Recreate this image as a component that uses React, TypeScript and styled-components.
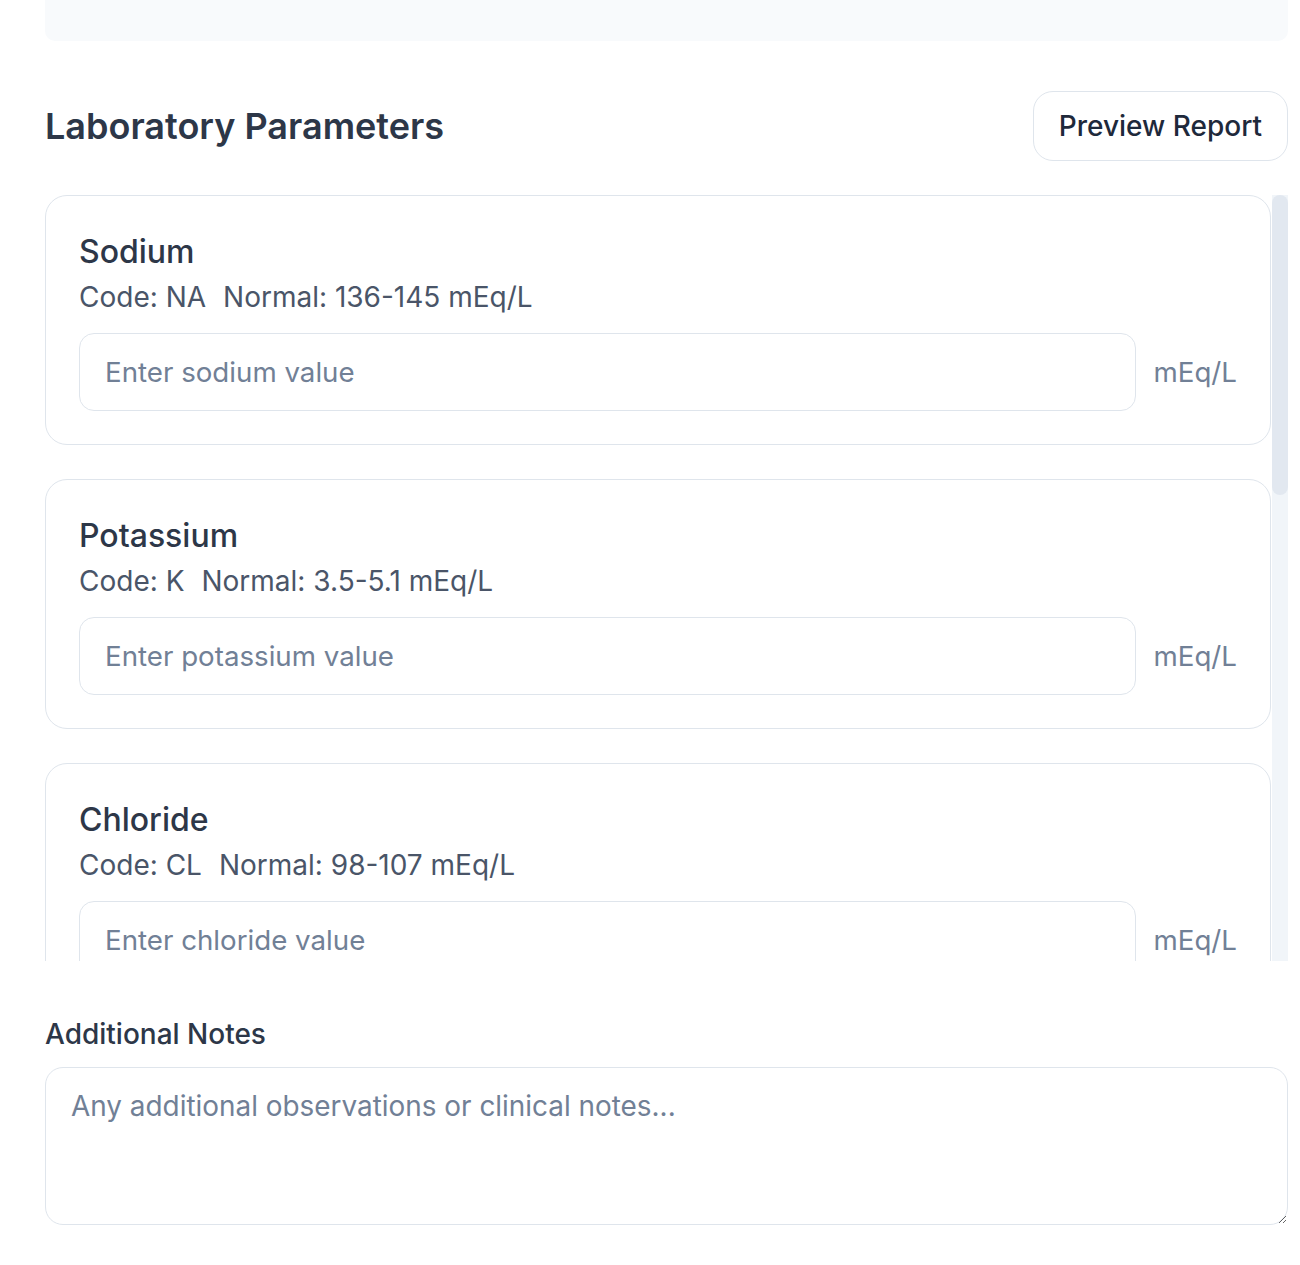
import React from "react";
import styled, { createGlobalStyle } from "styled-components";

const GlobalStyle = createGlobalStyle`
  html, body { margin: 0; padding: 0; background: #ffffff; }
  body { font-family: Inter, "Noto Sans", Arial, sans-serif; color: #2d3748; }
  * { box-sizing: border-box; }
`;

const Page = styled.div`
  width: 1288px;
  padding-left: 45px;
  display: flex;
  flex-direction: column;
`;

const TopPanel = styled.div`
  height: 41px;
  background: #f8fafc;
  border-radius: 0 0 10px 10px;
`;

const HeaderRow = styled.div`
  display: flex;
  align-items: center;
  justify-content: space-between;
  margin-top: 50px;
  height: 70px;
`;

const Title = styled.h2`
  margin: 0;
  font-size: 36px;
  line-height: 40px;
  font-weight: 600;
  color: #2d3748;
`;

const OutlineButton = styled.button`
  height: 70px;
  padding: 0 25px;
  border: 1.5px solid #dfe5ec;
  border-radius: 20px;
  background: #ffffff;
  font-family: Inter, sans-serif;
  font-size: 28px;
  font-weight: 500;
  color: #1e293b;
  cursor: pointer;
`;

const ScrollFrame = styled.div`
  margin-top: 34px;
  height: 766px;
  display: flex;
`;

const ScrollArea = styled.div`
  flex: 1;
  min-width: 0;
  overflow: hidden;
  display: flex;
  flex-direction: column;
  gap: 34px;
`;

const ScrollTrack = styled.div`
  width: 16px;
  flex: none;
  background: #f1f5f9;
`;

const ScrollThumb = styled.div`
  height: 300px;
  background: #e2e8f0;
  border-radius: 8px;
`;

const Card = styled.div`
  flex: none;
  margin-right: 1px;
  border: 1.5px solid #dfe5ec;
  border-radius: 22px;
  padding: 38px 33px 33px;
  background: #ffffff;
`;

const ParamName = styled.div`
  font-size: 32px;
  line-height: 36px;
  font-weight: 500;
  color: #2d3748;
`;

const Meta = styled.div`
  margin-top: 11px;
  display: flex;
  gap: 17px;
  font-size: 28px;
  line-height: 32px;
  color: #4a5568;
`;

const InputRow = styled.div`
  margin-top: 20px;
  display: flex;
  align-items: center;
  gap: 18px;
`;

const ValueInput = styled.input`
  flex: 1;
  height: 78px;
  border: 1.5px solid #dfe5ec;
  border-radius: 15px;
  padding: 0 25px;
  font-family: Inter, sans-serif;
  font-size: 27.7px;
  color: #2d3748;
  outline: none;
  &::placeholder { color: #718096; }
`;

const Unit = styled.span`
  font-size: 27.7px;
  color: #718096;
  white-space: nowrap;
`;

const NotesLabel = styled.label`
  margin-top: 57px;
  font-size: 28px;
  line-height: 32px;
  font-weight: 500;
  color: #2d3748;
`;

const NotesArea = styled.textarea`
  margin-top: 17px;
  height: 158px;
  border: 1.5px solid #dfe5ec;
  border-radius: 18px;
  padding: 20px 25px;
  font-family: Inter, sans-serif;
  font-size: 27.9px;
  line-height: 36px;
  color: #2d3748;
  outline: none;
  resize: vertical;
  &::placeholder { color: #718096; }
`;

const params = [
  { name: "Sodium", code: "NA", normal: "136-145 mEq/L", unit: "mEq/L", ph: "Enter sodium value" },
  { name: "Potassium", code: "K", normal: "3.5-5.1 mEq/L", unit: "mEq/L", ph: "Enter potassium value" },
  { name: "Chloride", code: "CL", normal: "98-107 mEq/L", unit: "mEq/L", ph: "Enter chloride value" },
  { name: "Bicarbonate", code: "HCO3", normal: "22-29 mEq/L", unit: "mEq/L", ph: "Enter bicarbonate value" },
  { name: "Blood Urea Nitrogen", code: "BUN", normal: "7-20 mg/dL", unit: "mg/dL", ph: "Enter blood urea nitrogen value" },
  { name: "Creatinine", code: "CR", normal: "0.7-1.3 mg/dL", unit: "mg/dL", ph: "Enter creatinine value" },
  { name: "Glucose", code: "GLU", normal: "70-100 mg/dL", unit: "mg/dL", ph: "Enter glucose value" },
];

export default function App() {
  return (
    <>
      <GlobalStyle />
      <Page>
        <TopPanel />
        <HeaderRow>
          <Title>Laboratory Parameters</Title>
          <OutlineButton>Preview Report</OutlineButton>
        </HeaderRow>
        <ScrollFrame>
          <ScrollArea>
            {params.map((p) => (
              <Card key={p.code}>
                <ParamName>{p.name}</ParamName>
                <Meta>
                  <span>Code: {p.code}</span>
                  <span>Normal: {p.normal}</span>
                </Meta>
                <InputRow>
                  <ValueInput placeholder={p.ph} />
                  <Unit>{p.unit}</Unit>
                </InputRow>
              </Card>
            ))}
          </ScrollArea>
          <ScrollTrack>
            <ScrollThumb />
          </ScrollTrack>
        </ScrollFrame>
        <NotesLabel>Additional Notes</NotesLabel>
        <NotesArea placeholder="Any additional observations or clinical notes..." />
      </Page>
    </>
  );
}
